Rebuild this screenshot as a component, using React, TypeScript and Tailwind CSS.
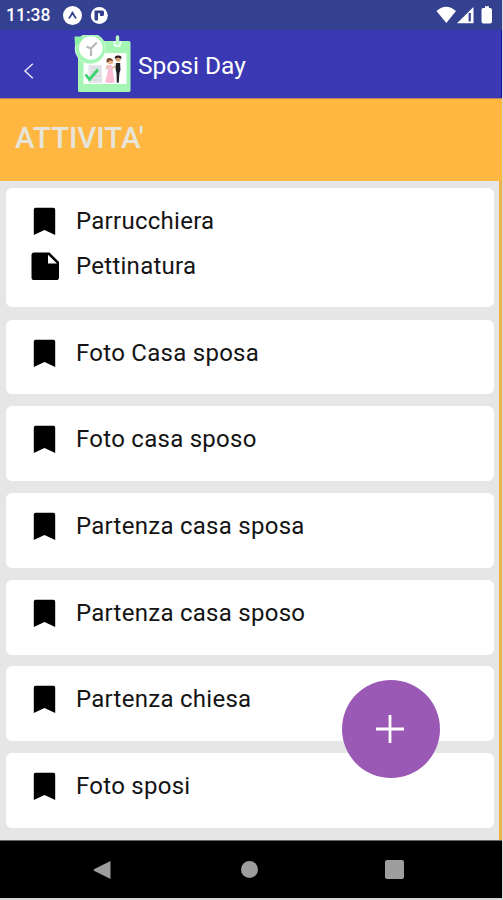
import React from "react";

type Activity = { title: string; note?: string; height: string };

const activities: Activity[] = [
  { title: "Parrucchiera", note: "Pettinatura", height: "h-[119px] mb-[13px]" },
  { title: "Foto Casa sposa", height: "h-[74px] mb-3" },
  { title: "Foto casa sposo", height: "h-[75px] mb-3" },
  { title: "Partenza casa sposa", height: "h-[75px] mb-3" },
  { title: "Partenza casa sposo", height: "h-[75px] mb-[11px]" },
  { title: "Partenza chiesa", height: "h-[75px] mb-3" },
  { title: "Foto sposi", height: "h-[75px]" },
];

function BookmarkIcon() {
  return (
    <svg className="ml-[27px] h-[28px] w-[23px] shrink-0" viewBox="0 0 23 28">
      <path d="M2.5 .8H20.5Q22.2 .8 22.2 2.5V28L11.5 23L.8 28V2.5Q.8 .8 2.5 .8Z" fill="#000" />
    </svg>
  );
}

function NoteIcon() {
  return (
    <svg className="ml-[25px] h-[28px] w-[29px] shrink-0" viewBox="0 0 29 28">
      <path
        fillRule="evenodd"
        d="M3 .5H18.5L28 10V25.2Q28 28 25.7 28H2.8Q.5 28 .5 25.2V3Q.5 .5 3 .5ZM17 2.8V11.6H26Z"
        fill="#000"
      />
    </svg>
  );
}

function Logo() {
  return (
    <svg className="ml-[39px] h-[58px] w-[58px] shrink-0" viewBox="73 35 58 58">
      <rect x="78" y="41" width="52.5" height="51" rx="1.5" fill="#a5f5b5" />
      <rect x="83.5" y="53" width="43" height="31" fill="#fff" />
      <path d="M114.5 41V43Q114.5 46.3 117.5 46.3Q120.5 46.3 120.5 43V41" fill="none" stroke="#effff1" strokeWidth="1.8" />
      <path d="M117.5 37V43" stroke="#b9f8c5" strokeWidth="3.4" strokeLinecap="round" />
      <circle cx="90.3" cy="48.5" r="15.5" fill="#d3fbda" />
      <circle cx="90.3" cy="48.5" r="14.7" fill="#a5f5b5" />
      <path d="M74.5 36.5H83L81 42L75 46Z" fill="#8df0a4" />
      <circle cx="90.8" cy="48" r="11.8" fill="#fff" />
      <path d="M91 56V48.5L86.5 46.5M91 48.5L96.8 42.5" fill="none" stroke="#b5bbb8" strokeWidth="2.2" />
      <path d="M88.5 65H102V83H88.5Z" fill="#e4e5e8" />
      <path d="M91 68H101M91 72H101M91 76H101M91 80H101" stroke="#d2d5d8" />
      <path d="M85.5 74.5L89.5 79.5L98 69.5" fill="none" stroke="#3bd472" strokeWidth="2.8" />
      <path d="M108.5 65H111.5L113 72L114.5 82Q109.5 84 105 82L107.5 73Z" fill="#f9bdd4" />
      <circle cx="110.5" cy="61.5" r="2.8" fill="#e6b491" />
      <path d="M107 63Q105.5 59 108.5 58Q112 57.5 113 61L109.5 60.5Z" fill="#79452e" />
      <path d="M108 65L106.5 69M112 68L116 66" stroke="#e6b491" strokeWidth="1.5" />
      <circle cx="118.2" cy="59" r="2.6" fill="#d9a17e" />
      <path d="M114.8 58.8Q114.5 55.3 118.2 55.5Q121.8 55.3 121.5 58.8L118.2 57.6Z" fill="#2a171b" />
      <path d="M115.9 63H120.1L120.5 70L119.4 73L118.7 82.7H116.8L116.5 73L115.6 69Z" fill="#202025" />
    </svg>
  );
}

function StatusBar() {
  return (
    <div className="flex h-[30px] items-center bg-[#344191] text-white">
      <span className="ml-[6px] mt-px w-[45px] whitespace-nowrap text-[17.5px] font-medium leading-none">11:38</span>
      <svg className="ml-[11px] h-5 w-12" viewBox="62 5 48 20">
        <circle cx="72.5" cy="15.5" r="9.5" fill="#fff" />
        <path d="M69.3 17.8Q71 16 72.5 12.4Q74 16 75.7 17.8" fill="none" stroke="#344191" strokeWidth="1.7" strokeLinecap="round" strokeLinejoin="round" />
        <circle cx="99.3" cy="15.5" r="8.5" fill="#fff" />
        <path d="M94.5 10.5H102.5Q104 10.5 104 12V14.5Q104 16 102.5 16H100V13.2H98V20.5H96Q94.5 20.5 94.5 19Z" fill="#344191" />
      </svg>
      <svg className="ml-auto mr-[8px] h-5 w-[58px]" viewBox="437 5 58 20">
        <path d="M437.5 11Q447 2.5 457 11L447.3 23Z" fill="#fff" />
        <path d="M458 23.3L474.5 7V23.3Z" fill="#fff" />
        <path d="M470.7 13V21.5" stroke="#344191" strokeWidth="2.2" />
        <path d="M484 8H486V6.3H490V8H491Q493 8 493 10V21.5Q493 23.5 491 23.5H484.5Q482.5 23.5 482.5 21.5V10Q482.5 8 484 8Z" fill="#fff" />
      </svg>
    </div>
  );
}

export default function App() {
  return (
    <div className="relative flex h-[900px] w-[503px] flex-col overflow-hidden bg-[#d8d8d8] font-['Roboto',sans-serif]">
      <div className="flex w-[502px] flex-col">
        <StatusBar />
        <header className="flex h-[68px] items-center border-r border-[#1515a0] bg-[#3b38b3]">
          <svg className="ml-[23px] mt-[13px] h-[18px] w-[11px] shrink-0" viewBox="0 0 11 18">
            <path d="M9.8 1.8L2 9L9.8 16.2" fill="none" stroke="#e4e3f8" strokeWidth="1.5" />
          </svg>
          <Logo />
          <h1 className="ml-[7px] mt-[3px] whitespace-nowrap text-[24.5px] font-normal leading-8 text-white">Sposi Day</h1>
        </header>
        <div className="flex h-[83px] items-center border-t border-[#b28560] bg-[#ffb742] pl-[15px]">
          <h2 className="mb-[4px] whitespace-nowrap text-[29.5px] font-medium leading-8 text-[#e7e4da]">ATTIVITA'</h2>
        </div>
        <main className="h-[659px] border-r-[3px] border-[#edb147] bg-[#e6e6e6] pl-[6px] pr-[5px] pt-[7px]">
          {activities.map((a) => (
            <section key={a.title} className={`rounded-[6px] bg-white pt-[10px] ${a.height}`}>
              <div className="flex h-[45px] items-center">
                <BookmarkIcon />
                <span className="ml-[20px] whitespace-nowrap text-[24px] leading-8 tracking-[0.27px] text-[#141414]">{a.title}</span>
              </div>
              {a.note && (
                <div className="flex h-[45px] items-center">
                  <NoteIcon />
                  <span className="ml-[16px] whitespace-nowrap text-[24px] leading-8 tracking-[0.27px] text-[#141414]">{a.note}</span>
                </div>
              )}
            </section>
          ))}
        </main>
        <nav className="flex h-[58px] items-center border-t border-[#666] bg-black">
          <svg className="ml-[93px] h-5 w-[18px]" viewBox="0 0 18 20">
            <path d="M17.5 1V19L1 10.8Q0 10 1 9.2Z" fill="#9d9d9d" />
          </svg>
          <div className="ml-[130px] size-[17px] rounded-full bg-[#9d9d9d]" />
          <div className="ml-[127px] size-[19px] rounded-[2px] bg-[#9d9d9d]" />
        </nav>
      </div>
      <button aria-label="Aggiungi" className="absolute left-[342px] top-[680px] flex size-[98px] items-center justify-center rounded-full bg-[#9b59b6]">
        <svg className="mr-[3px] size-[28px]" viewBox="0 0 28 28">
          <path d="M14 0V28M0 14H28" stroke="#fff" strokeWidth="2.8" />
        </svg>
      </button>
    </div>
  );
}
